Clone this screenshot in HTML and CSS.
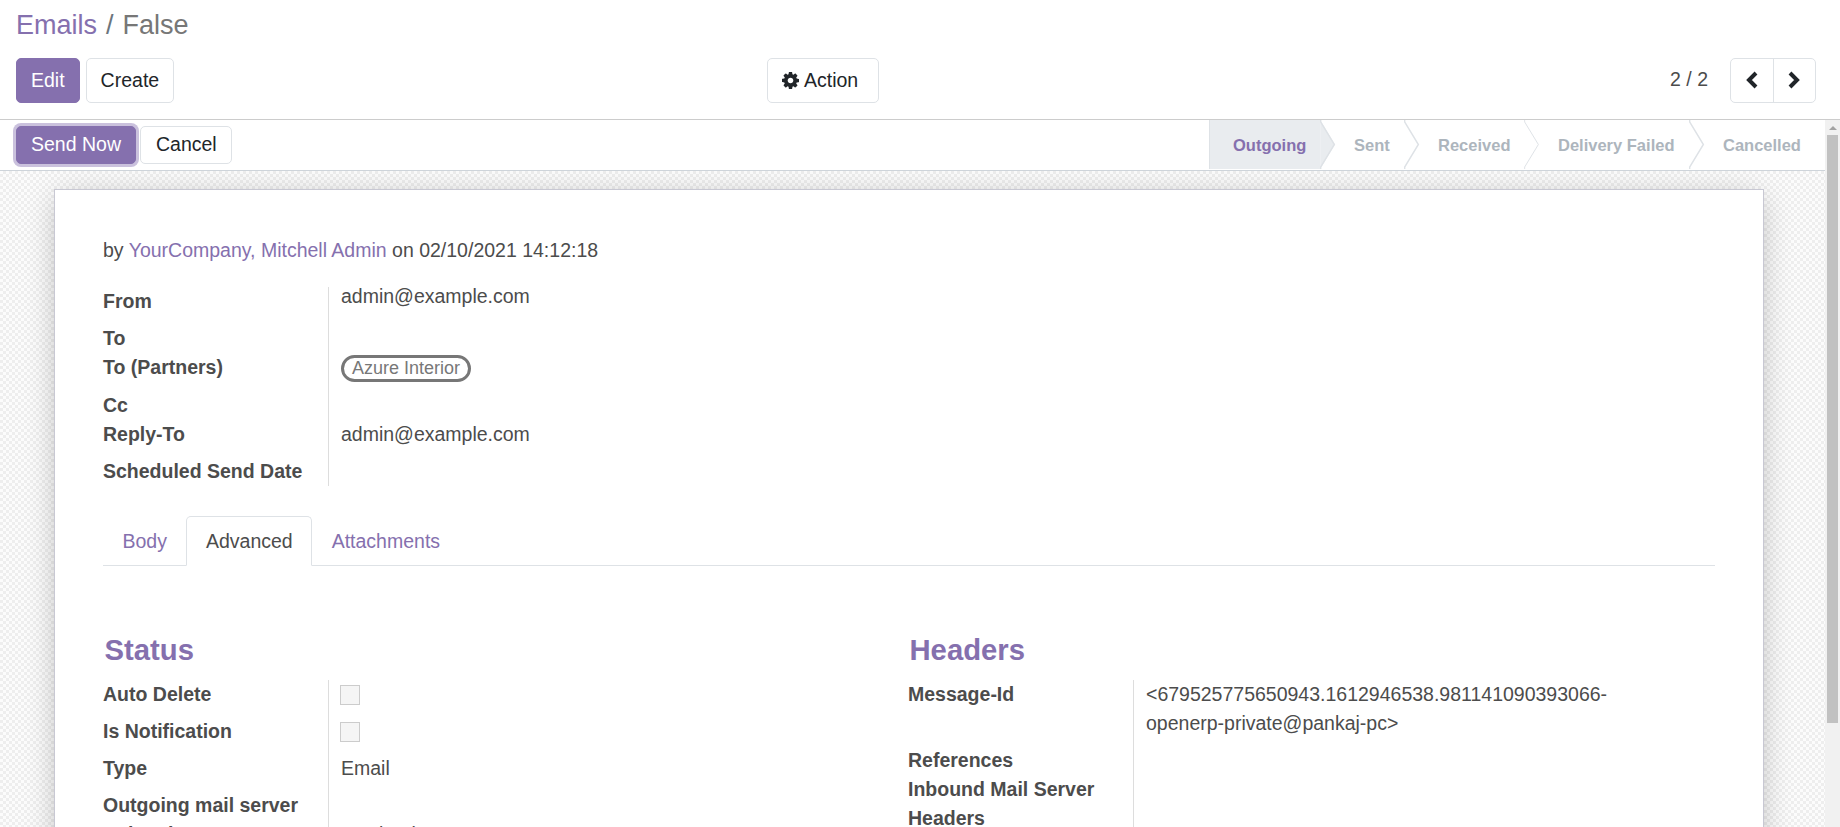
FILE: index.html
```html
<!DOCTYPE html>
<html lang="en">
<head>
<meta charset="utf-8">
<title>Emails</title>
<link rel="stylesheet" href="styles.css">
</head>
<body>
<header class="panel">
  <div class="crumbs"><a>Emails</a><span class="sep">/</span><span class="current">False</span></div>
  <div class="toolbar">
    <div class="buttons"><button class="btn primary">Edit</button><button class="btn">Create</button></div>
    <button class="btn action"><svg class="gear" viewBox="0 0 1536 1536"><path d="M1024 768q0-106-75-181t-181-75-181 75-75 181 75 181 181 75 181-75 75-181zm512-109v222q0 12-8 23t-20 13l-185 28q-19 54-39 91 35 50 107 138 10 12 10 25t-9 23q-27 37-99 108t-94 71q-12 0-26-9l-138-108q-44 23-91 38-16 136-29 186-7 28-36 28H657q-14 0-24.500-8.500T621 1506l-28-184q-49-16-90-37l-141 107q-10 9-25 9-14 0-25-11-126-114-165-168-7-10-7-23 0-12 8-23 15-21 51-66.500t54-70.500q-27-50-41-99L29 913q-13-2-21-12.500T0 877V655q0-12 8-23t19-13l186-28q14-46 39-92-40-57-107-138-10-12-10-24 0-10 9-23 26-36 98.500-107.500T337 135q13 0 26 10l138 107q44-23 91-38 16-136 29-186 7-28 36-28h222q14 0 24.500 8.500T915 30l28 184q49 16 90 37l142-107q9-9 24-9 13 0 25 10 129 119 165 170 7 8 7 22 0 12-8 23-15 21-51 66.500t-54 70.500q26 50 41 98l183 28q13 2 21 12.500t8 23.500z"/></svg>Action</button>
    <div class="pager"><span>2 / 2</span>
      <div class="pager-buttons">
        <button><svg viewBox="0 0 14 18"><path d="M11 2 4 9l7 7"/></svg></button>
        <button><svg viewBox="0 0 14 18"><path d="m3 2 7 7-7 7"/></svg></button>
      </div>
    </div>
  </div>
</header>
<main class="content">
  <div class="view">
    <div class="statusbar">
      <div class="status-buttons"><button class="btn primary focus">Send Now</button><button class="btn">Cancel</button></div>
      <div class="stages">
        <div class="stage active">Outgoing<svg viewBox="0 0 16 50"><path class="fill" d="M0 0 15 25 0 50z"/><path d="M.5 0v2l14 23-14 23v2"/></svg></div>
        <div class="stage sent">Sent<svg viewBox="0 0 16 50"><path d="M.5 0v2l14 23-14 23v2"/></svg></div>
        <div class="stage received">Received<svg class="thin" viewBox="0 0 16 50"><path d="M.5 0v2l14 23-14 23v2"/></svg></div>
        <div class="stage failed">Delivery Failed<svg viewBox="0 0 16 50"><path d="M.5 0v2l14 23-14 23v2"/></svg></div>
        <div class="stage cancelled">Cancelled</div>
      </div>
    </div>
    <div class="backdrop">
      <section class="sheet">
        <p class="byline">by <a>YourCompany, Mitchell Admin</a> on 02/10/2021 14:12:18</p>
        <dl class="group envelope">
          <dt class="tall">From</dt><dd class="raised">admin@example.com</dd>
          <dt>To</dt><dd></dd>
          <dt class="mid">To (Partners)</dt><dd><span class="tag">Azure Interior</span></dd>
          <dt>Cc</dt><dd></dd>
          <dt class="tall">Reply-To</dt><dd>admin@example.com</dd>
          <dt>Scheduled Send Date</dt><dd></dd>
        </dl>
        <nav class="tabs"><a>Body</a><a class="selected">Advanced</a><a>Attachments</a></nav>
        <div class="columns">
          <div>
            <h2>Status</h2>
            <dl class="group">
              <dt class="tall">Auto Delete</dt><dd><span class="check"></span></dd>
              <dt class="tall">Is Notification</dt><dd><span class="check"></span></dd>
              <dt class="tall">Type</dt><dd>Email</dd>
              <dt>Outgoing mail server</dt><dd></dd>
              <dt>Related Document</dt><dd>crm.lead</dd>
            </dl>
          </div>
          <div>
            <h2>Headers</h2>
            <dl class="group">
              <dt class="double">Message-Id</dt><dd>&lt;679525775650943.1612946538.981141090393066-<br>openerp-private@pankaj-pc&gt;</dd>
              <dt>References</dt><dd></dd>
              <dt>Inbound Mail Server</dt><dd></dd>
              <dt>Headers</dt><dd></dd>
              <dt></dt><dd></dd>
            </dl>
          </div>
        </div>
      </section>
    </div>
  </div>
  <div class="scrollbar"><span class="arrow"></span><span class="thumb"></span></div>
</main>
</body>
</html>
```
FILE: styles.css
```css
* { box-sizing: border-box; }
body {
  margin: 0;
  height: 827px;
  overflow: hidden;
  display: flex;
  flex-direction: column;
  background: #fff;
  color: #4c4c4c;
  font: 19.5px/29.25px "Liberation Sans", Arial, sans-serif;
}
a { color: #8570ae; }
button { font: inherit; margin: 0; }
p, dl, dd, h2 { margin: 0; }

.panel { flex: none; height: 120px; border-bottom: 1px solid #ccc; padding: 5px 24px 0 16px; }
.crumbs { height: 53px; font-size: 27px; line-height: 41px; }
.crumbs .sep { padding: 0 9px; color: #6c757d; }
.crumbs .current { color: #777; }
.toolbar { display: grid; grid-template-columns: 751px 1fr auto; align-items: start; }
.buttons { display: flex; gap: 6px; }
.btn {
  height: 45px;
  padding: 0 14px;
  border: 1px solid #dee2e6;
  border-radius: 5px;
  background: #fff;
  color: #212529;
}
.btn.primary { background: #8570ae; border-color: #8570ae; color: #fff; }
.btn.action { justify-self: start; width: 112px; display: flex; align-items: center; }
.gear { width: 17px; height: 17px; margin-right: 5px; fill: #212529; flex: none; }
.pager { display: flex; align-items: center; gap: 22px; }
.pager > span { margin-bottom: 2px; }
.pager-buttons { display: flex; border: 1px solid #dee2e6; border-radius: 5px; height: 45px; width: 86px; }
.pager-buttons button { flex: 1; border: 0; background: none; padding: 0; display: flex; align-items: center; justify-content: center; }
.pager-buttons button + button { border-left: 1px solid #dee2e6; }
.pager-buttons svg { width: 14px; height: 18px; margin-bottom: 2px; fill: none; stroke: #212529; stroke-width: 4; }

.content { flex: 1; min-height: 0; display: flex; }
.view { flex: 1; display: flex; flex-direction: column; min-width: 0; }
.statusbar {
  flex: none;
  height: 51px;
  display: flex;
  justify-content: space-between;
  border-bottom: 1px solid #ced4da;
  padding-left: 16px;
}
.status-buttons { display: flex; gap: 4px; padding-top: 6px; }
.status-buttons .btn { height: 38px; line-height: 34px; padding: 0 14px 2px 15px; }
.status-buttons .focus { padding-left: 14px; box-shadow: 0 0 0 3px #cac1dd; }
.stages { display: flex; height: 49px; font-size: 16.5px; font-weight: bold; line-height: 51px; color: #adb5bd; }
.stage { position: relative; padding-left: 34px; width: 84px; white-space: nowrap; }
.stage svg { position: absolute; right: -16px; top: 0; width: 16px; height: 49px; fill: none; stroke: #dee2e6; stroke-width: 1.5; z-index: 1; }
.stage .thin { stroke-width: 1; }
.stage svg .fill { fill: #e9ecef; stroke: none; }
.stage.active { width: 111px; padding-left: 23px; border-left: 1px solid #dee2e6; background: #e9ecef; color: #8570ae; }
.stage.received { width: 120px; }
.stage.failed { width: 165px; }
.stage.cancelled { width: 136px; }

.backdrop {
  flex: 1;
  min-height: 0;
  overflow: hidden;
  padding: 18px 61px 0 54px;
  background: repeating-conic-gradient(#eee 0 25%, #fcfcfc 0 50%) 0 0 / 6px 6px;
}
.sheet {
  height: 900px;
  border: 1px solid #c8c8d3;
  background: #fff;
  box-shadow: 0 5px 30px -5px rgba(0, 0, 0, .28);
  padding: 46px 48px 0;
}
.byline { height: 51px; }
.group { display: grid; grid-template-columns: 226px 1fr; grid-auto-rows: min-content; }
.group dt { font-weight: bold; height: 29px; border-right: 1px solid #ddd; white-space: nowrap; }
.group dt.tall { height: 37px; }
.group dt.mid { height: 38px; }
.group dt.double { height: 66px; }
.group dd { height: 0; padding-left: 12px; white-space: nowrap; }
.group dd.raised { margin-top: -5px; }
.envelope { height: 199px; }
.tag {
  display: block;
  width: 130px;
  height: 27px;
  margin-top: 2px;
  padding-left: 8px;
  border: 3px solid #777;
  border-radius: 14px;
  font-size: 18px;
  line-height: 20px;
  color: #777;
}
.check { display: block; width: 20px; height: 20px; margin: 5px 0 0 -1px; border: 1px solid #ccc; background: #f5f5f5; }
.tabs { display: flex; height: 50px; margin-top: 30px; border-bottom: 1px solid #dee2e6; }
.tabs a { height: 50px; padding: 10px 18.5px 0; border: 1px solid transparent; }
.tabs .selected { color: #4c4c4c; background: #fff; border-color: #dee2e6 #dee2e6 #fff; border-radius: 5px 5px 0 0; }
.columns { display: grid; grid-template-columns: 805px 1fr; margin-top: 62px; }
.columns h2 { height: 52px; padding-left: 1.5px; color: #8570ae; font-size: 29.25px; line-height: 44px; }

.scrollbar { flex: none; width: 15px; background: #f1f1f1; display: flex; flex-direction: column; align-items: center; }
.arrow { width: 0; height: 0; margin: 6px 0 5px; border: 4px solid transparent; border-top: 0; border-bottom-color: #a3a3a3; }
.thumb { width: 11px; height: 588px; background: #c1c1c1; }
```
